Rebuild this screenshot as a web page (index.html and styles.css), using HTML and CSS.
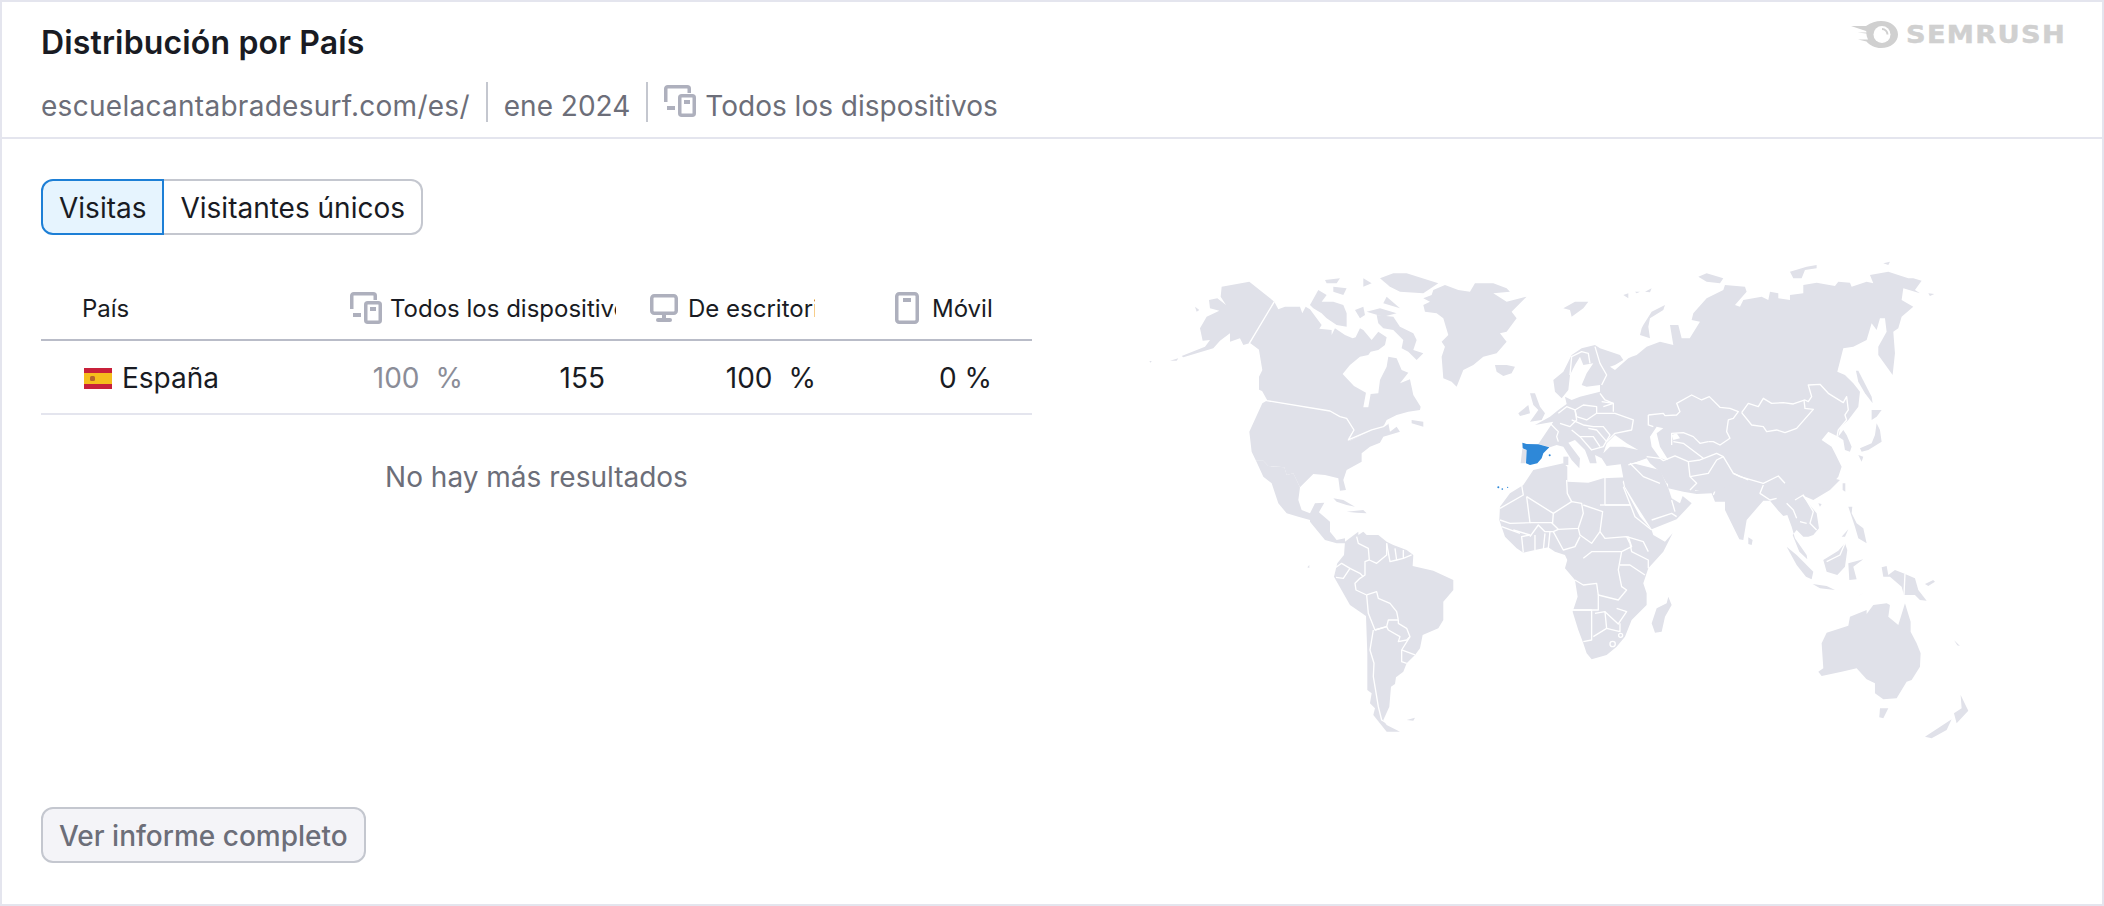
FILE: index.html
```html
<!DOCTYPE html>
<html>
	<head>
		<meta charset="utf-8">
		<title>Distribución por País</title>
		<link rel="stylesheet" href="styles.css">
	</head>
	<body>
		<div class="card">
			<div class="head">
				<div class="head-left">
					<div class="title">Distribución por País</div>
					<div class="meta">
						<span class="meta-item meta-url">escuelacantabradesurf.com/es/</span>
						<span class="meta-item">ene 2024</span>
						<span class="meta-item meta-device">
							<svg class="ico-devices" viewBox="0 0 32 32"><use href="#devices"/></svg>
							<span>Todos los dispositivos</span>
						</span>
					</div>
				</div>
				<div class="logo">
					<svg class="logo-mark" viewBox="0 0 48 30">
						<path d="M0 7H15C20 3.500 25 2 30 2C40 2 47 8 47 15.500C47 23 40 29 30 29C24 29 19 26.500 15.500 22.500L7 20.500H17C16 18.500 15.500 16.500 15.300 14.500L6.500 13.500H15.500C15.500 13 15.300 12.500 15 12Z" fill="#d0d0d0"/>
						<circle cx="31" cy="15.500" r="8.500" fill="#fff"/>
						<path d="M31 10C34 10 36.500 12.500 36.500 15.500" fill="none" stroke="#d0d0d0" stroke-width="2"/>
					</svg>
					<span class="logo-text">SEMRUSH</span>
				</div>
			</div>

			<div class="main">
				<div class="left">
					<div class="tabs">
						<div class="tab tab-on">Visitas</div>
						<div class="tab">Visitantes únicos</div>
					</div>

					<div class="row row-head">
						<div class="cell-name"><span class="name-pad">País</span></div>
						<div class="th th-all">
							<svg class="ico-devices" viewBox="0 0 32 32"><use href="#devices"/></svg>
							<span class="clip">Todos los dispositivos</span>
						</div>
						<div class="th th-desk">
							<svg class="ico-desk" viewBox="0 0 28 28">
								<rect x="1.750" y="1.750" width="24.500" height="17.500" rx="2.500" fill="none" stroke="#aeb0bd" stroke-width="3.500"/>
								<rect x="12" y="20" width="4" height="5" fill="#aeb0bd"/>
								<rect x="6" y="24" width="16" height="4" rx="2" fill="#aeb0bd"/>
							</svg>
							<span class="clip">De escritorio</span>
						</div>
						<div class="th th-mob">
							<svg class="ico-mob" viewBox="0 0 24 32">
								<rect x="1.750" y="1.750" width="20.500" height="28.500" rx="2.500" fill="none" stroke="#aeb0bd" stroke-width="3.500"/>
								<rect x="8" y="6" width="8" height="4" fill="#aeb0bd"/>
							</svg>
							<span class="clip">Móvil</span>
						</div>
					</div>

					<div class="row row-body">
						<div class="cell-name country">
							<svg class="flag" viewBox="0 0 28 21">
								<rect width="28" height="21" fill="#c8203a"/>
								<rect y="5" width="28" height="11" fill="#f5bd1c"/>
								<rect x="6" y="8" width="5" height="5" rx="1.500" fill="#b5632c"/>
							</svg>
							España
						</div>
						<div class="td td-all">
							<span class="pct pct-grey"><span>100</span><span>%</span></span>
							<span class="count">155</span>
						</div>
						<div class="td td-desk"><span class="pct"><span>100</span><span>%</span></span></div>
						<div class="td td-mob"><span>0 %</span></div>
					</div>

					<div class="nomore">No hay más resultados</div>
				</div>

				<svg class="map" viewBox="1130 250 850 510">
					<!-- north america, arctic, greenland -->
					<g transform="translate(1130,250) scale(.3333)">
						<g class="land">
							<polygon points="358,95 433,155 358,280 340,285 330,265 300,275 300,250 270,272 250,295 160,322 155,318 225,290 240,270 218,272 210,235 230,200 268,182 240,175 237,150 262,145 288,165 272,140 275,110"/>
							<polygon points="433,155 445,178 465,170 510,170 517,190 527,170 540,178 575,225 568,236 605,240 605,255 615,235 645,255 668,265 677,262 690,235 700,240 725,270 745,245 770,262 765,285 745,300 722,305 715,315 690,320 660,345 638,372 650,385 672,408 708,428 700,472 715,472 722,432 745,430 750,390 770,350 775,320 800,325 815,360 835,368 810,400 840,388 850,435 872,470 870,480 835,485 800,495 770,510 760,530 725,540 660,572 655,565 672,540 650,505 630,500 600,483 410,452 395,425 385,420 385,380 395,360 385,300 358,280"/>
							<polygon points="397,460 410,452 600,483 630,500 650,505 672,540 655,565 660,572 725,540 760,530 775,520 780,545 800,530 810,545 760,560 750,578 720,590 695,610 695,635 650,660 640,690 648,720 630,722 625,685 585,675 550,672 510,712 490,670 470,675 463,652 415,648 400,632 378,632 365,605 358,545"/>
							<polygon points="740,195 790,200 810,230 850,250 860,270 850,300 880,310 860,330 835,305 815,295 820,270 790,240 760,235 745,220"/>
							<polygon points="540,165 565,120 590,135 575,155 610,155 640,165 650,190 650,230 620,225 590,205 575,190 550,175"/>
							<polygon points="675,180 700,170 705,195 690,205"/>
							<polygon points="700,85 725,100 700,110"/>
							<polygon points="750,85 790,70 830,70 925,100 880,130 810,125 780,110"/>
							<polygon points="585,90 630,85 620,100 590,100"/>
							<polygon points="610,110 650,115 640,135 610,125"/>
							<polygon points="770,140 810,175 760,160"/>
							<polygon points="710,185 750,175 800,190 760,200"/>
							<polygon points="910,120 945,105 985,120 1020,125 1035,100 1090,100 1130,115 1140,125 1090,130 1130,155 1190,140 1145,185 1160,205 1130,245 1110,250 1130,275 1100,310 1060,320 1030,345 1000,360 980,410 965,395 940,385 935,320 945,290 935,275 955,255 940,205 920,190 885,185 880,165 900,155 880,145 905,135"/>
							<polygon points="1095,345 1130,345 1155,350 1145,370 1120,378 1100,365"/>
							<polygon points="845,510 880,515 880,530 845,520"/>
							<polygon points="195,170 208,180 200,185"/>
							<polygon points="120,332 145,325 140,332"/>
							<polygon points="58,333 65,333 62,338"/>
						</g>
						<polyline class="line" points="433,155 358,280 385,300 395,360 385,380 385,420 395,425 410,452 600,483 630,500 650,505 672,540 655,570 725,540 760,530 775,520"/>
					</g>

					<!-- mexico, south america, africa -->
					<g transform="translate(1230,480) scale(.3333)">
						<g class="land">
							<polygon points="78,-58 100,-58 115,-42 163,-38 170,-15 190,-20 210,22 205,60 215,90 240,100 255,70 283,68 265,100 245,100 240,120 205,110 170,100 145,70 125,10 100,-10"/>
							<polygon points="240,100 265,95 300,125 300,155 320,180 345,175 345,190 320,190 285,180 240,125"/>
							<polygon points="310,55 340,60 375,80 350,75 320,65"/>
							<polygon points="350,95 400,90 410,100 380,98"/>
							<polygon points="345,185 385,155 385,165 400,155 410,165 445,165 470,185 490,195 530,210 550,225 548,258 610,272 670,300 670,330 640,365 640,420 625,445 578,465 570,505 555,525 530,550 520,575 498,592 495,612 483,620 478,680 460,720 470,735 510,755 470,755 430,705 435,685 420,670 425,640 412,630 412,520 408,408 360,375 312,290 322,250 342,225"/>
							<polygon points="530,720 555,713 550,722"/>
							<polygon points="232,262 238,255 238,264"/>
							<polygon points="910,-30 1000,-50 1012,-40 1012,5 1075,8 1120,-5 1190,-8 1178,5 1182,20 1230,110 1265,150 1270,165 1305,185 1328,160 1300,215 1255,265 1240,310 1250,340 1250,375 1205,420 1185,470 1160,500 1130,525 1085,538 1070,520 1060,490 1045,450 1028,395 1043,350 1035,300 1005,265 1012,240 1005,225 975,215 955,202 915,210 880,218 860,205 825,170 808,120 810,80 840,40 880,15"/>
						</g>
						<g class="line">
							<polyline points="380,170 385,190 415,205 418,240 440,250 470,225 470,190"/>
							<polyline points="418,240 405,245 405,285 390,295 375,310 378,330 410,345"/>
							<polyline points="318,262 335,250 360,265 340,295 318,292"/>
							<polyline points="360,265 390,280 400,290"/>
							<polyline points="470,190 480,245 500,240 495,205"/>
							<polyline points="500,240 520,235 520,210"/>
							<polyline points="520,235 545,225"/>
							<polyline points="410,345 440,335 445,355 480,370 500,395 505,420"/>
							<polyline points="410,345 415,400 435,450 470,440 475,420 505,420"/>
							<polyline points="470,440 475,450 510,470 505,485 530,480 540,470 530,445 505,430 505,420"/>
							<polyline points="430,450 420,510 432,550 430,590 445,680 455,720 472,730"/>
							<polyline points="540,470 515,510 555,525"/>
							<polyline points="515,510 515,545 530,550"/>
							<polyline points="435,450 470,440"/>
							<polyline points="875,15 880,45 810,85"/>
							<polyline points="890,50 900,128 840,130 810,120"/>
							<polyline points="890,50 970,100 968,128 900,128"/>
							<polyline points="1010,0 1012,40 1025,65"/>
							<polyline points="970,100 1025,65 1055,70 1060,100 1045,145 985,148 965,128"/>
							<polyline points="1125,-20 1125,75"/>
							<polyline points="1060,75 1118,95 1110,155 1085,190 1050,165 1045,145"/>
							<polyline points="1125,75 1200,75"/>
							<polyline points="1110,155 1125,175 1190,170 1200,190"/>
							<polyline points="985,148 970,155 1000,210 1035,200 1050,170"/>
							<polyline points="900,170 925,135 945,155 970,155"/>
							<polyline points="915,165 915,210"/>
							<polyline points="945,160 940,210"/>
							<polyline points="960,155 955,205"/>
							<polyline points="850,150 900,165 875,170 880,218"/>
							<polyline points="815,140 870,160"/>
							<polyline points="1060,235 1085,215 1175,215 1165,270 1175,320 1190,330 1165,360 1105,345 1105,390 1028,390"/>
							<polyline points="1035,300 1060,315 1100,310 1105,345"/>
							<polyline points="1030,390 1085,390 1085,480 1060,485"/>
							<polyline points="1090,470 1130,445 1125,395 1095,400"/>
							<polyline points="1125,395 1165,432 1190,395 1160,385"/>
							<polyline points="1175,215 1205,200 1195,170"/>
							<polyline points="1200,190 1205,215 1255,240 1255,265"/>
							<polyline points="1190,170 1240,185 1255,215"/>
							<polyline points="1170,255 1200,255 1245,285"/>
							<polyline points="1130,445 1170,455 1170,430"/>
							<circle cx="1148" cy="492" r="8"/>
							<circle cx="1172" cy="466" r="6"/>
						</g>
						<g class="spain">
							<circle cx="805" cy="22" r="3"/>
							<circle cx="817" cy="27" r="2.500"/>
							<circle cx="833" cy="22" r="2"/>
						</g>
					</g>

					<!-- south asia, oceania -->
					<g transform="translate(1600,480) scale(.3333)">
						<g class="land">
							<polygon points="60,-60 180,-30 205,25 215,55 240,70 248,48 275,70 230,118 155,148 105,70 75,20"/>
							<polygon points="205,25 250,35 290,42 335,40 345,65 375,65 375,90 418,178 430,180 440,120 490,62 510,62 535,92 550,108 562,105 575,140 585,175 620,225 622,238 598,215 578,165 590,150 610,170 625,170 640,165 657,145 650,100 625,70 605,45 640,60 690,30 720,0 600,-30 200,-30"/>
							<polygon points="445,172 458,180 455,195 445,192"/>
							<polygon points="205,350 215,375 195,410 185,455 165,458 155,430 170,385 200,370"/>
							<polygon points="560,200 590,225 640,275 635,298 618,290 590,255"/>
							<polygon points="638,312 680,318 705,330 660,325"/>
							<polygon points="670,240 715,212 735,190 742,210 735,260 712,285 680,275"/>
							<polygon points="745,250 790,238 760,260 770,298 748,300"/>
							<polygon points="845,262 860,258 865,285 885,270 910,280 945,295 955,330 980,362 960,360 945,345 912,345 905,320 870,290 850,290"/>
							<polygon points="728,10 736,10 736,35 728,30"/>
							<polygon points="655,70 665,72 660,80"/>
							<polygon points="745,80 757,80 755,100 770,130 790,145 800,190 775,175 765,140"/>
							<polygon points="780,345 798,335 775,348"/>
							<polygon points="975,312 1000,300 990,290 1005,305 985,318"/>
							<polygon points="680,458 745,437 750,410 800,390 800,402 820,375 860,370 870,375 865,410 895,435 915,370 932,425 932,455 950,490 962,520 960,560 935,600 920,605 890,655 850,658 825,640 825,610 800,598 770,565 725,575 665,588 655,575 670,565 665,490"/>
							<polygon points="840,685 865,685 850,715 838,712"/>
							<polygon points="1082,645 1105,692 1070,730 1062,700 1085,685"/>
							<polygon points="975,770 1055,718 1040,750 995,775"/>
							<polygon points="1062,480 1080,498 1072,496"/>
							<polygon points="725,170 745,148 735,170"/>
						</g>
						<g class="line">
							<polyline points="155,120 215,100 230,110"/>
							<polyline points="215,60 225,95"/>
							<polyline points="340,45 350,20 285,30"/>
							<polyline points="490,15 480,40 510,60 530,55"/>
							<polyline points="560,70 580,90 590,115"/>
							<polyline points="585,60 610,45 640,95 630,130 650,150"/>
							<polyline points="600,125 620,130"/>
							<polyline points="680,245 720,225 735,190"/>
							<polyline points="915,282 912,345"/>
							<polyline points="0,75 90,75"/>
							<polyline points="70,20 105,110 155,150"/>
						</g>
					</g>

					<!-- europe, asia -->
					<g transform="translate(1500,250) scale(.3333)">
						<g class="land">
							<polygon points="285,285 300,295 360,315 370,330 345,345 330,350 345,360 385,325 395,320 410,315 440,290 480,275 520,285 510,225 535,225 545,265 575,265 570,275 555,305 535,305 560,280 600,215 575,210 580,190 620,145 670,120 675,105 735,110 740,125 705,165 720,170 730,150 785,140 805,150 810,125 835,130 835,145 870,150 870,135 910,130 910,105 950,98 1005,108 1015,95 1050,98 1055,110 1100,95 1120,100 1110,75 1165,65 1225,85 1240,85 1265,92 1245,120 1260,130 1210,115 1205,150 1240,170 1205,200 1195,235 1180,245 1185,310 1178,375 1135,315 1135,290 1160,245 1155,205 1140,205 1130,240 1115,220 1100,270 1060,290 1030,295 1012,365 1035,375 1060,400 1080,425 1075,470 1045,510 1020,535 1015,560 985,545 965,570 995,590 1005,610 1025,650 1015,680 985,715 900,720 830,700 700,700 650,725 590,720 550,720 500,700 480,665 450,640 440,625 400,640 385,640 320,648 305,625 285,615 290,640 270,640 255,600 225,570 205,578 240,625 238,655 215,630 190,590 170,585 150,592 115,582 160,515 105,525 150,500 175,480 200,462 195,440 215,450 240,440 300,425 300,405 260,410 245,405 260,370 280,340 250,345 240,320 225,345 210,375 205,420 185,445 165,425 160,390 190,365 205,335 215,315 245,295"/>
							<polygon points="1015,560 1030,540 1040,555 1055,590 1050,605 1035,600 1030,570"/>
							<polygon points="1130,520 1140,540 1145,575 1105,600 1085,605 1080,595 1115,580 1125,555"/>
							<polygon points="1115,480 1145,480 1130,500 1115,510"/>
							<polygon points="1075,615 1090,620 1085,635"/>
							<polygon points="1068,362 1075,362 1115,440 1118,460 1095,430 1075,395"/>
							<polygon points="90,430 105,430 120,470 135,490 125,510 90,515 115,480 100,465"/>
							<polygon points="55,490 85,465 90,490 60,498"/>
							<polygon points="190,175 225,155 265,155 250,175 215,200 210,180"/>
							<polygon points="430,225 455,185 495,165 490,180 450,205 445,230 450,265 420,255 425,235"/>
							<polygon points="595,80 620,70 670,85 660,100 620,95"/>
							<polygon points="870,65 920,50 950,45 950,55 915,60 905,85 880,85"/>
							<polygon points="370,135 385,130 385,145"/>
							<polygon points="405,125 420,125 410,130"/>
							<polygon points="435,125 455,115 450,127"/>
							<polygon points="1150,40 1170,35 1165,45"/>
							<polygon points="1285,130 1303,132 1290,138"/>
							<polygon points="190,620 205,620 205,645 190,645"/>
						</g>
						<g class="sea">
							<polygon points="320,580 345,555 380,580 415,600 370,590 330,590 310,610"/>
							<polygon points="450,560 470,530 490,535 470,550 480,590 505,630 480,625 455,590"/>
							<polygon points="515,555 530,550 540,565 520,570"/>
						</g>
						<g class="line">
							<polyline points="445,495 490,490 495,497 530,495 540,485 530,460 575,435 605,450 628,440 660,472 690,475 715,485 700,505 685,510 680,545 690,565 660,585 640,575 625,575"/>
							<polyline points="445,495 445,525 460,530"/>
							<polyline points="515,585 515,550 550,548 580,560 600,580 625,575"/>
							<polyline points="520,575 550,580 610,625"/>
							<polyline points="725,488 745,460 775,470 790,445 815,460 850,458 880,462 915,450 925,455 935,440 925,405 960,403 985,430 1030,458 1040,440 1045,480 1035,495 1040,510 1015,540 1010,565"/>
							<polyline points="725,488 755,525 790,530 800,545 830,540 855,548 890,535 940,478 915,475 912,450"/>
							<polyline points="440,620 480,625 490,632 525,618 565,635 570,680 590,700 570,720"/>
							<polyline points="565,635 600,630 650,610 670,620 700,670 745,690"/>
							<polyline points="570,680 625,670 650,630 670,620"/>
							<polyline points="700,670 720,680 790,700 835,678 855,700"/>
							<polyline points="385,645 440,630"/>
							<polyline points="390,640 430,680 480,700"/>
							<polyline points="210,375 215,320 245,305 265,310 270,340"/>
							<polyline points="285,290 300,340 320,375 305,405"/>
							<polyline points="225,480 250,465 290,470 290,490 260,510 230,500 225,480"/>
							<polyline points="175,490 200,470 225,480 230,510 210,530 180,520"/>
							<polyline points="150,520 175,545 170,560 175,575"/>
							<polyline points="290,490 345,490 400,510 395,540 345,550 320,575 290,540 265,535"/>
							<polyline points="215,510 250,525 280,530 310,530 330,555 310,590 275,600 240,560 215,540"/>
							<polyline points="305,455 340,460 310,470"/>
							<polyline points="300,430 315,450 340,460 340,485"/>
							<polyline points="240,560 280,560 300,590"/>
						</g>
						<polygon class="land" points="67,597 80,600 77,640 62,640"/>
						<polygon class="spain" points="67,578 80,582 115,583 148,592 130,610 125,625 112,640 90,645 78,640 80,600 68,595"/>
						<circle class="spain" cx="149" cy="616" r="3"/>
					</g>

					<symbol id="devices" viewBox="0 0 32 32">
						<path d="M1.750 17V3.750a2 2 0 0 1 2-2h19.500a2 2 0 0 1 2 2V8" fill="none" stroke="#aeb0bd" stroke-width="3.500"/>
						<rect x="3" y="21" width="8" height="4" fill="#aeb0bd"/>
						<rect x="15.750" y="10.750" width="14.500" height="19.500" rx="2" fill="none" stroke="#aeb0bd" stroke-width="3.500"/>
						<rect x="20" y="15" width="6" height="4" fill="#aeb0bd"/>
					</symbol>
				</svg>
			</div>

			<div class="foot">
				<div class="btn">Ver informe completo</div>
			</div>
		</div>
	</body>
</html>
```

FILE: styles.css
```css
body{
	margin: 0;
	padding: 0;
	background-color: #fff;
	font-family: Inter, "Noto Sans", sans-serif;
	font-size: 28px;
	color: #191b23;
}
.card{
	height: 906px;
	box-sizing: border-box;
	border: 2px solid #e4e5ee;
	display: flex;
	flex-direction: column;
}

/* head */
.head{
	height: 137px;
	box-sizing: border-box;
	border-bottom: 2px solid #e4e5ee;
	padding: 25px 39px 0;
	display: flex;
	justify-content: space-between;
}
.title{
	font-size: 32px;
	font-weight: 600;
	line-height: 32px;
	letter-spacing: .15px;
}
.meta{
	display: flex;
	margin-top: 23px;
	color: #6c6e79;
}
.meta-item{
	height: 40px;
	line-height: 48px;
	padding-right: 16px;
	margin-right: 16px;
	border-right: 2px solid #c4c7cf;
	white-space: nowrap;
}
.meta-url{
	letter-spacing: .28px;
}
.meta-device{
	display: flex;
	align-items: flex-start;
	gap: 9px;
	border-right: 0;
	margin-right: 0;
}
.meta-device .ico-devices{
	margin-top: 3px;
}
.ico-devices{
	width: 32px;
	height: 32px;
	flex: none;
}

/* logo */
.logo{
	display: flex;
	align-items: flex-start;
	gap: 7px;
	margin-top: -8px;
	height: 30px;
}
.logo-mark{
	width: 48px;
	height: 30px;
}
.logo-text{
	font-family: "DejaVu Sans", sans-serif;
	font-weight: 700;
	font-size: 25px;
	letter-spacing: 1.200px;
	line-height: 32px;
	color: #d0d0d0;
	-webkit-text-stroke: .5px #d0d0d0;
	transform: scaleX(1.09);
	transform-origin: left center;
	margin-right: 10px;
}

/* main */
.main{
	display: flex;
	padding-left: 39px;
}
.left{
	width: 991px;
	flex: none;
	padding-top: 40px;
}
.map{
	width: 850px;
	height: 510px;
	margin-left: 98px;
	margin-top: 111px;
	flex: none;
}
.land{
	fill: #e0e1e9;
}
.sea{
	fill: #fff;
}
.line{
	fill: none;
	stroke: #fff;
	stroke-width: 4;
	stroke-linejoin: round;
}
.line polyline,.line circle{
	fill: none;
}
.spain{
	fill: #2e88d8;
}

/* tabs */
.tabs{
	display: flex;
	height: 56px;
}
.tab{
	box-sizing: border-box;
	height: 56px;
	line-height: 55px;
	padding: 0 16px;
	border: 2px solid #c4c7cf;
	border-left: 0;
	border-radius: 0 12px 12px 0;
}
.tab-on{
	border: 2px solid #1d7fd6;
	border-radius: 12px 0 0 12px;
	background-color: #e6f4fe;
}

/* table */
.row{
	display: grid;
	grid-template-columns: 309px 300px 245px 137px;
	align-items: center;
}
.row-head{
	margin-top: 40px;
	height: 66px;
	padding-top: 2px;
	box-sizing: border-box;
	border-bottom: 2px solid #b9bcc8;
	font-size: 24px;
}
.row-body{
	height: 74px;
	padding-top: 2px;
	box-sizing: border-box;
	border-bottom: 2px solid #e4e5ee;
}
.name-pad{
	padding-left: 41px;
}
.country{
	display: flex;
	align-items: center;
	gap: 10px;
	padding-left: 43px;
}
.flag{
	width: 28px;
	height: 21px;
}
.th{
	display: flex;
	align-items: center;
	overflow: hidden;
	white-space: nowrap;
}
.clip{
	overflow: hidden;
}
.th-all{
	width: 266px;
	gap: 8px;
}
.th-desk{
	width: 165px;
	gap: 10px;
}
.th-mob{
	width: 97px;
	gap: 13px;
}
.ico-desk{
	width: 28px;
	height: 28px;
	flex: none;
}
.ico-mob{
	width: 24px;
	height: 32px;
	flex: none;
}
.td-all{
	display: flex;
	width: 255px;
}
.pct{
	display: flex;
	justify-content: space-between;
}
.pct-grey{
	width: 113px;
	color: #8b8d98;
	justify-content: flex-end;
	gap: 16px;
}
.count{
	width: 142px;
	text-align: right;
}
.td-desk{
	width: 166px;
}
.td-desk .pct{
	justify-content: flex-end;
	gap: 16px;
}
.td-mob{
	width: 97px;
	text-align: right;
}
.nomore{
	text-align: center;
	color: #6c6e79;
	margin-top: 45px;
	line-height: 34px;
}

/* foot */
.foot{
	margin-top: auto;
	padding: 0 39px 41px;
}
.btn{
	display: inline-block;
	box-sizing: border-box;
	height: 56px;
	line-height: 55px;
	padding: 0 16px;
	border: 2px solid #c4c7cf;
	border-radius: 12px;
	background-color: #f4f4f8;
	color: #6c6e79;
	font-weight: 500;
}
```
